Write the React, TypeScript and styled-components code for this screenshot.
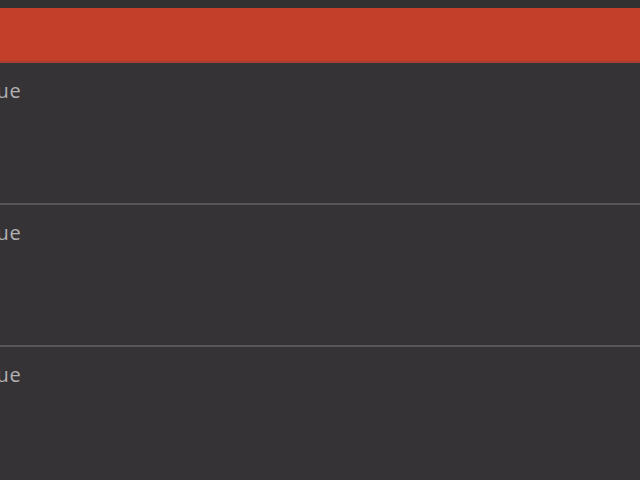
import React from "react";
import styled, { createGlobalStyle } from "styled-components";

const GlobalStyle = createGlobalStyle`
  html, body {
    margin: 0;
    padding: 0;
    background: #353336;
    overflow: hidden;
  }
  * {
    box-sizing: border-box;
  }
`;

const rows = ["Value", "Value", "Value"];

export default function App() {
  return (
    <>
      <GlobalStyle />
      <Page>
        <TopStrip />
        <Header />
        <List>
          {rows.map((label, i) => (
            <Row key={i} $last={i === rows.length - 1}>
              <Label>{label}</Label>
            </Row>
          ))}
        </List>
      </Page>
    </>
  );
}

const Page = styled.div`
  width: 640px;
  height: 480px;
  display: flex;
  flex-direction: column;
  background: #353336;
  overflow: hidden;
`;

const TopStrip = styled.div`
  flex-shrink: 0;
  height: 8px;
  background: #323132;
`;

const Header = styled.div`
  flex-shrink: 0;
  height: 55px;
  background: #c43f2a;
  border-bottom: 2px solid #a9402f;
`;

const List = styled.div`
  flex-shrink: 0;
  display: flex;
  flex-direction: column;
`;

const Row = styled.div<{ $last: boolean }>`
  flex-shrink: 0;
  height: ${(p) => (p.$last ? "140px" : "142px")};
  padding-top: 16px;
  border-bottom: ${(p) => (p.$last ? "none" : "2px solid #58565a")};
`;

const Label = styled.div`
  margin-left: -34px;
  font-family: "Open Sans", "Noto Sans", sans-serif;
  font-size: 20px;
  letter-spacing: 0.8px;
  line-height: 24px;
  color: #b3b1b4;
`;
